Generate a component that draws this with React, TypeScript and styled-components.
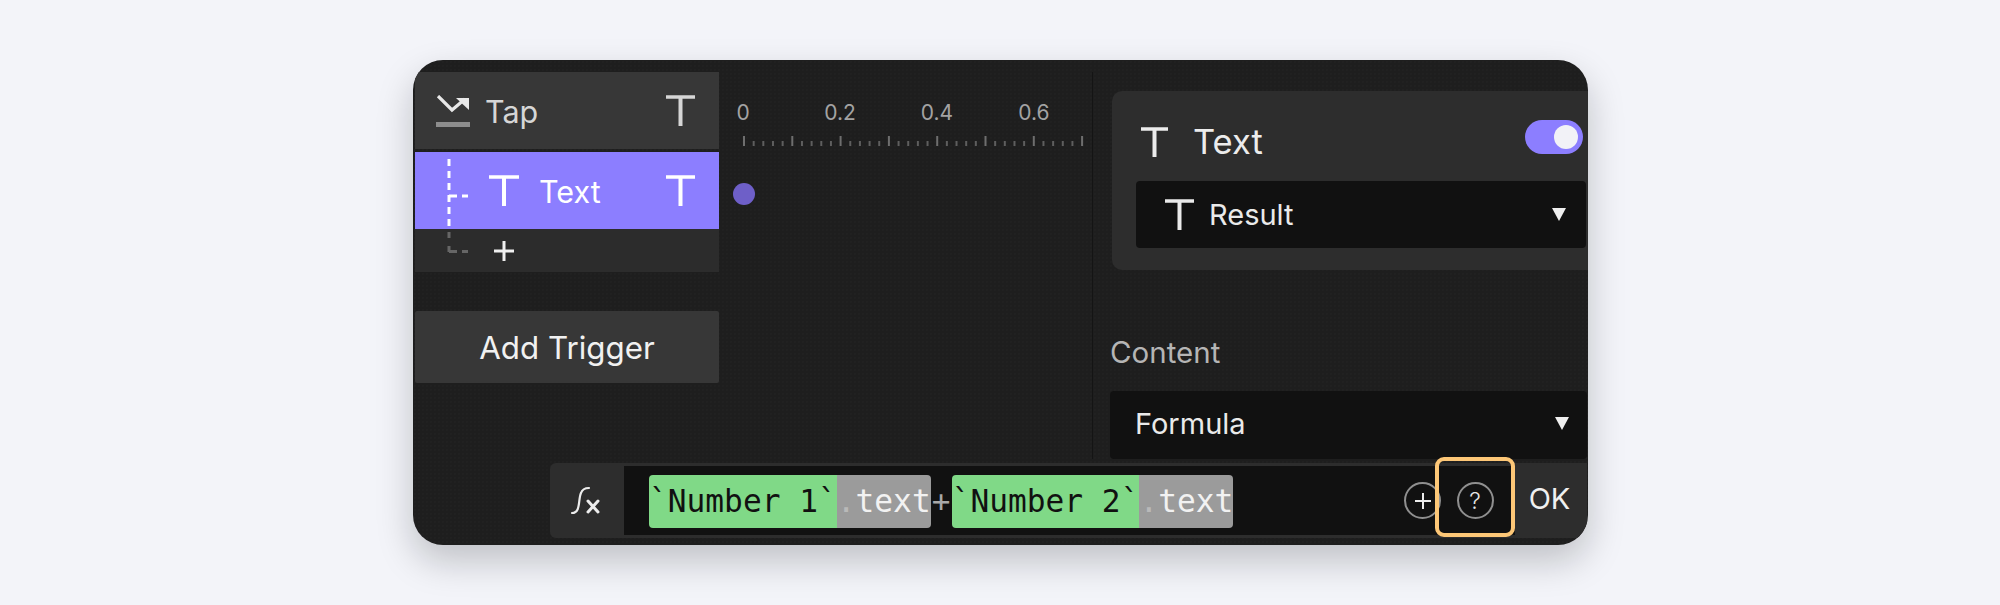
import React from "react";
import styled, { createGlobalStyle } from "styled-components";

const Global = createGlobalStyle`
  html, body { margin: 0; padding: 0; background: #f3f4f9; }
  body { font-family: Inter, "Liberation Sans", sans-serif; }
`;

const Page = styled.div`
  height: 605px;
  overflow: hidden;
  box-sizing: border-box;
  padding: 60px 0 0 413px;
`;

const Card = styled.div`
  width: 1175px;
  height: 485px;
  box-sizing: border-box;
  padding: 12px 0 7px 2px;
  border-radius: 30px;
  overflow: hidden;
  background-color: #1e1e1e;
  background-image: radial-gradient(rgba(255, 255, 255, 0.025) 0.6px, transparent 0.8px);
  background-size: 4px 4px;
  box-shadow: 0 16px 36px rgba(10, 12, 20, 0.22);
  display: flex;
  flex-direction: column;
`;

const Main = styled.div`
  display: grid;
  grid-template-columns: 304px 373px 1fr;
  height: 387px;
`;

const LeftPanel = styled.div`
  display: flex;
  flex-direction: column;
`;

const TapRow = styled.div`
  height: 77px;
  background: #373737;
  display: flex;
  align-items: center;
  padding: 0 24px 0 21px;
  color: #d6d6d6;
`;

const RowLabel = styled.span<{ $gap: number }>`
  font-size: 30.5px;
  line-height: 1;
  padding-top: 3px;
  margin-left: ${(p) => p.$gap}px;
  flex: 1;
  color: inherit;
`;

const ChildGroup = styled.div`
  position: relative;
  margin-top: 3px;
  background: #2c2c2c;
  height: 120px;
`;

const TextRow = styled.div`
  height: 77px;
  background: #8c7eff;
  display: flex;
  align-items: center;
  padding: 0 24px 0 74px;
  color: #fff;
`;

const AddRow = styled.div`
  height: 43px;
  display: flex;
  align-items: center;
  padding-left: 78px;
`;

const TreeLines = styled.svg`
  position: absolute;
  left: 30px;
  top: 0;
`;

const AddTrigger = styled.div`
  margin-top: 39px;
  height: 72px;
  box-sizing: border-box;
  padding-top: 2px;
  background: #373737;
  color: #f1f1f1;
  font-size: 31.3px;
  display: flex;
  align-items: center;
  justify-content: center;
  border-radius: 2px;
`;

const Timeline = styled.div`
  padding-top: 28px;
`;

const Scale = styled.div`
  display: flex;
  gap: 57px;
  padding-left: 4px;
`;

const ScaleLabel = styled.span`
  width: 40px;
  text-align: center;
  color: #a3a3a3;
  font-size: 21px;
  line-height: 26px;
`;

const Ruler = styled.svg`
  display: block;
  margin: 10px 0 0 24px;
`;

const Dot = styled.div`
  width: 22px;
  height: 22px;
  border-radius: 50%;
  background: #6e5fc8;
  margin: 37px 0 0 14px;
`;

const RightPanel = styled.div`
  border-left: 1px solid #141414;
  padding: 19px 0 0 17px;
  display: flex;
  flex-direction: column;
`;

const PropsCard = styled.div`
  margin-left: 2px;
  height: 179px;
  background: #2d2d2d;
  border-radius: 10px 0 0 10px;
  box-sizing: border-box;
  padding: 29px 0 0 24px;
`;

const PropsHead = styled.div`
  height: 34px;
  display: flex;
  align-items: flex-start;
  padding: 0 5px 0 5px;
  color: #ececec;
`;

const HeadIcon = styled.span`
  display: flex;
  margin-top: 7px;
`;

const HeadLabel = styled.span`
  flex: 1;
  font-size: 34.5px;
  line-height: 44px;
  margin-left: 25px;
`;

const Toggle = styled.div`
  width: 58px;
  height: 34px;
  border-radius: 17px;
  background: #8c7eff;
  display: flex;
  align-items: center;
  justify-content: flex-end;
  padding-right: 5px;
  box-sizing: border-box;
`;

const Knob = styled.div`
  width: 24px;
  height: 24px;
  border-radius: 50%;
  background: #f2f2f7;
`;

const Select = styled.div<{ $left: number; $h: number; $arrow: number }>`
  height: ${(p) => p.$h}px;
  background: #111111;
  border-radius: 4px;
  display: flex;
  align-items: center;
  padding: 0 ${(p) => p.$arrow}px 0 ${(p) => p.$left}px;
  color: #eaeaea;
  font-size: 29px;
`;

const ResultSelect = styled(Select)`
  margin: 27px 2px 0 0;
`;

const SelectLabel = styled.span<{ $gap: number }>`
  flex: 1;
  margin-left: ${(p) => p.$gap}px;
`;

const Arrow = styled.div`
  width: 0;
  height: 0;
  border-left: 7.5px solid transparent;
  border-right: 7.5px solid transparent;
  border-top: 13px solid #efefef;
`;

const SectionLabel = styled.div`
  margin-top: 64px;
  height: 36px;
  line-height: 36px;
  font-size: 29.5px;
  color: #b5b5b5;
`;

const FormulaSelect = styled(Select)`
  margin: 21px 1px 0 0;
  box-sizing: border-box;
  padding-bottom: 3px;
`;

const Bar = styled.div`
  margin: 4px 1px 0 135px;
  height: 75px;
  background: #2d2d2d;
  border-radius: 6px 0 0 6px;
  display: flex;
  align-items: stretch;
`;

const FxCell = styled.div`
  width: 74px;
  box-sizing: border-box;
  padding-right: 4px;
  display: flex;
  align-items: center;
  justify-content: center;
`;

const InputArea = styled.div`
  flex: 1;
  margin: 3px 0;
  background: #111111;
  display: flex;
  align-items: center;
  padding-left: 25px;
`;

const Chip = styled.span<{ $bg: string; $fg: string; $side: "l" | "r" }>`
  height: 53px;
  line-height: 53px;
  margin-top: 2px;
  background: ${(p) => p.$bg};
  color: ${(p) => p.$fg};
  font-family: "DejaVu Sans Mono", "Liberation Mono", monospace;
  font-size: 31.2px;
  border-radius: ${(p) => (p.$side === "l" ? "4px 0 0 4px" : "0 4px 4px 0")};
  white-space: pre;
`;

const Dim = styled.span`
  color: #b9b9b9;
`;

const Plus = styled.span`
  width: 21px;
  margin-top: 2px;
  text-align: center;
  color: #a8a8a8;
  font-size: 31px;
  font-family: "DejaVu Sans Mono", monospace;
  line-height: 53px;
`;

const Grow = styled.div`
  flex: 1;
`;

const RoundIcon = styled.div`
  width: 37px;
  height: 37px;
  box-sizing: border-box;
  border: 2px solid #8f8f8f;
  border-radius: 50%;
  color: #e4e4e4;
  display: flex;
  align-items: center;
  justify-content: center;
  font-size: 23px;
  font-weight: 300;
`;

const AddCell = styled.div`
  margin-right: -6px;
  display: flex;
`;

const HelpCell = styled.div`
  position: relative;
  align-self: stretch;
  width: 80px;
  display: flex;
  align-items: center;
  justify-content: center;
  &::after {
    content: "";
    position: absolute;
    left: 0;
    right: 0;
    top: -9px;
    bottom: -2px;
    border: 4px solid #fdc777;
    border-radius: 9px;
  }
`;

const OkCell = styled.div`
  width: 72px;
  display: flex;
  align-items: center;
  justify-content: center;
  color: #f0f0f0;
  font-size: 29px;
  padding: 0 3px 5px 0;
  box-sizing: border-box;
`;

const TIcon = ({ size, h }: { size: number; h?: number }) => {
  const height = h ?? size;
  return (
    <svg width={size} height={height} viewBox={`0 0 ${size} ${height}`} fill="none" stroke="currentColor" style={{ flex: "none" }}>
      <path d={`M0 2H${size}`} strokeWidth="3.4" />
      <path d={`M${size / 2} 2V${height}`} strokeWidth="4" />
    </svg>
  );
};

const TapIcon = () => (
  <svg width="34" height="32" viewBox="0 0 34 32" fill="none" style={{ flex: "none" }}>
    <path d="M2 1L16 15L29 4" stroke="#e8e8e8" strokeWidth="3.2" />
    <path d="M20 3H33V15Z" fill="#e8e8e8" />
    <rect x="0" y="27" width="34" height="5" fill="#8d8d8d" />
  </svg>
);

const FxIcon = () => (
  <svg width="30" height="30" viewBox="0 0 30 30" fill="none" stroke="#ececec" strokeLinecap="round" style={{ flex: "none" }}>
    <path d="M2 27C11 27 8 13 11 7C12 4 15 2 19 2" strokeWidth="2.2" />
    <path d="M18 15L28 26M28 15L18 26" strokeWidth="3" />
  </svg>
);

const ticks = Array.from({ length: 36 }, (_, i) => i);

export default function App() {
  return (
    <>
      <Global />
      <Page>
        <Card>
          <Main>
            <LeftPanel>
              <TapRow>
                <TapIcon />
                <RowLabel $gap={15}>Tap</RowLabel>
                <TIcon size={29} h={31} />
              </TapRow>
              <ChildGroup>
                <TextRow>
                  <TIcon size={30} h={31} />
                  <RowLabel $gap={20}>Text</RowLabel>
                  <TIcon size={29} h={31} />
                </TextRow>
                <AddRow>
                  <svg width="22" height="22" viewBox="0 0 22 22" stroke="#f0f0f0" strokeWidth="3">
                    <path d="M1 11H21M11 1V21" />
                  </svg>
                </AddRow>
                <TreeLines width="30" height="105" viewBox="0 0 30 105" fill="none" strokeWidth="3">
                  <path d="M4 7V77" stroke="#fff" strokeDasharray="7 5" />
                  <path d="M4 44H12M17 44H23" stroke="#fff" />
                  <path d="M4 80V100" stroke="#666" strokeDasharray="6 8" />
                  <path d="M4 99.5H12M17 99.5H23" stroke="#666" />
                </TreeLines>
              </ChildGroup>
              <AddTrigger>Add Trigger</AddTrigger>
            </LeftPanel>
            <Timeline>
              <Scale>
                <ScaleLabel>0</ScaleLabel>
                <ScaleLabel>0.2</ScaleLabel>
                <ScaleLabel>0.4</ScaleLabel>
                <ScaleLabel>0.6</ScaleLabel>
              </Scale>
              <Ruler width="342" height="10" viewBox="0 0 342 10">
                {ticks.map((i) => {
                  const x = 1 + i * 9.66;
                  return i % 5 === 0 ? (
                    <rect key={i} x={x - 1} y="0" width="2" height="10" fill="#6e6e6e" />
                  ) : (
                    <rect key={i} x={x - 1} y="5" width="2" height="5" fill="#5e5e5e" />
                  );
                })}
              </Ruler>
              <Dot />
            </Timeline>
            <RightPanel>
              <PropsCard>
                <PropsHead>
                  <HeadIcon>
                    <TIcon size={27} h={30} />
                  </HeadIcon>
                  <HeadLabel>Text</HeadLabel>
                  <Toggle>
                    <Knob />
                  </Toggle>
                </PropsHead>
                <ResultSelect $left={29} $h={67} $arrow={20}>
                  <TIcon size={29} h={31} />
                  <SelectLabel $gap={15}>Result</SelectLabel>
                  <Arrow />
                </ResultSelect>
              </PropsCard>
              <SectionLabel>Content</SectionLabel>
              <FormulaSelect $left={25} $h={68} $arrow={18}>
                <SelectLabel $gap={0}>Formula</SelectLabel>
                <Arrow />
              </FormulaSelect>
            </RightPanel>
          </Main>
          <Bar>
            <FxCell>
              <FxIcon />
            </FxCell>
            <InputArea>
              <Chip $bg="#80d987" $fg="#111" $side="l">`Number 1`</Chip>
              <Chip $bg="#9b9b9b" $fg="#f2f2f2" $side="r"><Dim>.</Dim>text</Chip>
              <Plus>+</Plus>
              <Chip $bg="#80d987" $fg="#111" $side="l">`Number 2`</Chip>
              <Chip $bg="#9b9b9b" $fg="#f2f2f2" $side="r"><Dim>.</Dim>text</Chip>
              <Grow />
              <AddCell>
                <RoundIcon>
                  <svg width="20" height="20" viewBox="0 0 20 20" stroke="#ececec" strokeWidth="2">
                    <path d="M2 10H18M10 2V18" />
                  </svg>
                </RoundIcon>
              </AddCell>
              <HelpCell>
                <RoundIcon>?</RoundIcon>
              </HelpCell>
            </InputArea>
            <OkCell>OK</OkCell>
          </Bar>
        </Card>
      </Page>
    </>
  );
}
